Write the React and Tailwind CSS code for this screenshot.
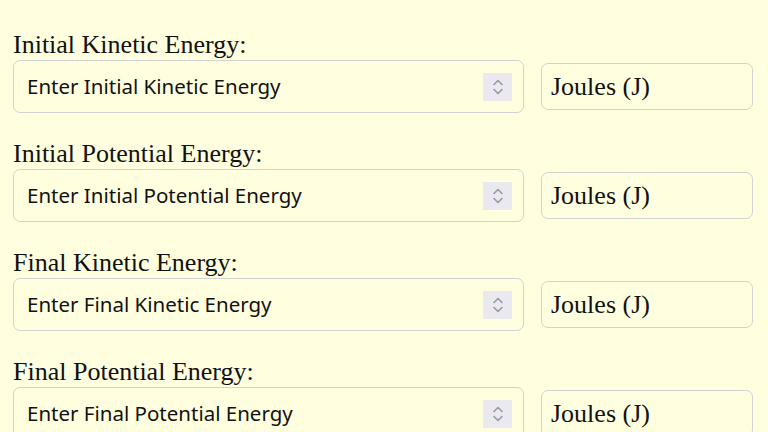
import React from "react";

const rows = [
  { label: "Initial Kinetic Energy:", ph: "Enter Initial Kinetic Energy" },
  { label: "Initial Potential Energy:", ph: "Enter Initial Potential Energy" },
  { label: "Final Kinetic Energy:", ph: "Enter Final Kinetic Energy" },
  { label: "Final Potential Energy:", ph: "Enter Final Potential Energy" },
];

function Spinner() {
  return (
    <div className="flex h-[28px] w-[29px] items-center justify-center bg-[#e9e9ef]">
      <svg width="12" height="20" viewBox="0 0 12 20" fill="none" stroke="#9a9aa6" strokeWidth="1.6" strokeLinecap="round" strokeLinejoin="round">
        <path d="M2 7.5 L6 3.5 L10 7.5" />
        <path d="M2 12.5 L6 16.5 L10 12.5" />
      </svg>
    </div>
  );
}

export default function App() {
  return (
    <div className="min-h-screen w-full bg-[#ffffe0] pl-[13px] pt-[30px]">
      {rows.map((r) => (
        <div key={r.label} className="mb-[26px] flex flex-col">
          <div className="h-[30px] text-[26px] leading-[30px] text-[#111] [font-family:'Liberation_Serif',serif]">
            {r.label}
          </div>
          <div className="flex items-center gap-[17px]">
            <div className="flex h-[53px] w-[511px] items-center justify-between rounded-[7px] border-[1.5px] border-[#d2d2d2] pl-[13px] pr-[11px]">
              <span className="text-[20.5px] font-[450] text-[#111] [font-family:'Noto_Sans',sans-serif]">{r.ph}</span>
              <Spinner />
            </div>
            <div className="flex h-[47px] w-[212px] items-center rounded-[7px] border-[1.5px] border-[#d2d2d2] pl-[9px] text-[26px] text-[#111] [font-family:'Liberation_Serif',serif]">
              Joules (J)
            </div>
          </div>
        </div>
      ))}
    </div>
  );
}
